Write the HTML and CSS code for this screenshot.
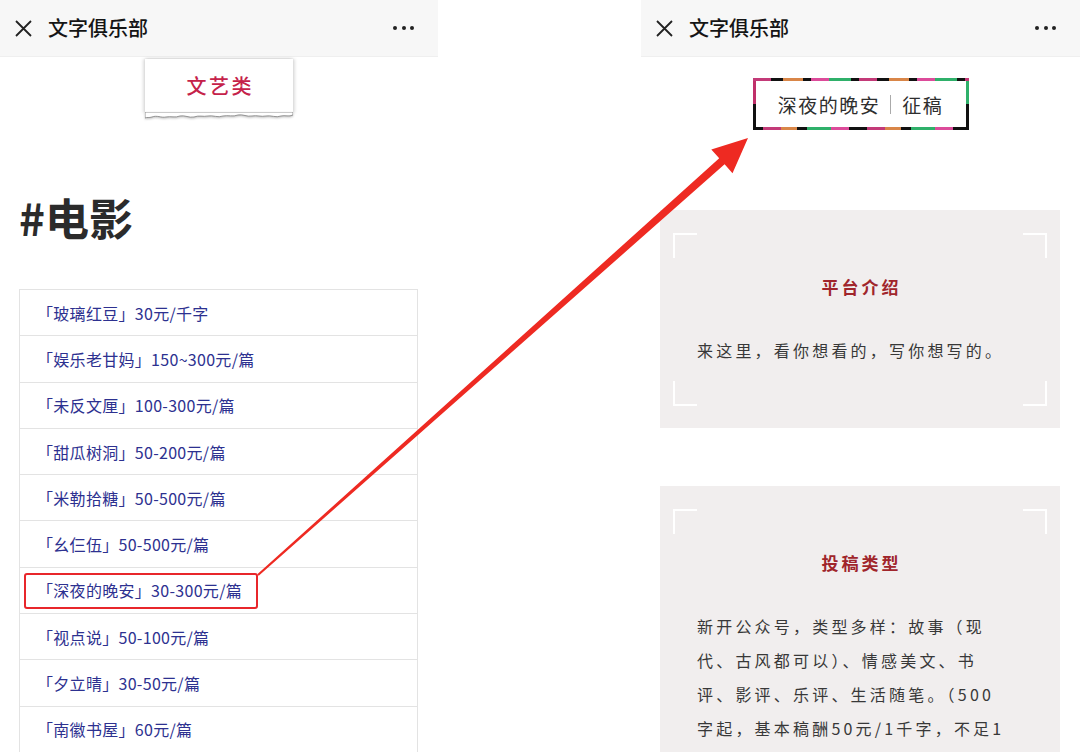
FILE: index.html
```html
<!DOCTYPE HTML>
<html>
<head>
<meta http-equiv="Content-Type" content="text/html; charset=utf-8">
<title>文字俱乐部</title>
<link rel="stylesheet" href="styles.css">
</head>

<body>
<div class="screens">
	<!-- 左边：分类列表 -->
	<div class="phone">
		<div class="topbar">
			<svg class="tb-close" width="17" height="17" viewBox="0 0 17 17"><path d="M1 1L16 16M16 1L1 16" stroke="#222" stroke-width="1.8" fill="none"/></svg>
			<span class="tb-title">文字俱乐部</span>
			<span class="tb-more"><i></i><i></i><i></i></span>
		</div>
		<div class="page">
			<div class="tag">
				<div class="tag-body">文艺类</div>
				<svg class="tag-edge" width="148" height="9" viewBox="0 0 148 9"><path d="M0 0H148V3C144 5 140 3 136 4C131 6 126 3 121 4C116 5 112 3 107 4C102 5 98 2 93 3C88 5 83 3 78 4C73 6 68 3 63 4C58 5 54 3 49 5C44 6 40 3 35 4C30 6 26 4 21 5C16 6 12 3 7 5C4 6 2 5 0 6Z" fill="#fff" stroke="#8a8a8a" stroke-width="0.9"/></svg>
			</div>
			<h1 class="cat">#电影</h1>
			<table class="accounts">
				<tr><td>「玻璃红豆」30元/千字</td></tr>
				<tr><td>「娱乐老甘妈」150~300元/篇</td></tr>
				<tr><td>「未反文厘」100-300元/篇</td></tr>
				<tr><td>「甜瓜树洞」50-200元/篇</td></tr>
				<tr><td>「米勒拾糖」50-500元/篇</td></tr>
				<tr><td>「幺仨伍」50-500元/篇</td></tr>
				<tr><td>「深夜的晚安」30-300元/篇</td></tr>
				<tr><td>「视点说」50-100元/篇</td></tr>
				<tr><td>「夕立晴」30-50元/篇</td></tr>
				<tr><td>「南徽书屋」60元/篇</td></tr>
			</table>
		</div>
	</div>
	<!-- 右边：征稿页 -->
	<div class="phone">
		<div class="topbar">
			<svg class="tb-close" width="17" height="17" viewBox="0 0 17 17"><path d="M1 1L16 16M16 1L1 16" stroke="#222" stroke-width="1.8" fill="none"/></svg>
			<span class="tb-title">文字俱乐部</span>
			<span class="tb-more"><i></i><i></i><i></i></span>
		</div>
		<div class="page">
			<div class="banner"><span>深夜的晚安</span><i class="banner-bar"></i><span>征稿</span></div>
			<div class="card">
				<span class="cn cn-tl"></span><span class="cn cn-tr"></span><span class="cn cn-bl"></span><span class="cn cn-br"></span>
				<h2 class="card-tit">平台介绍</h2>
				<p class="card-txt">来这里，看你想看的，写你想写的。</p>
			</div>
			<div class="card">
				<span class="cn cn-tl"></span><span class="cn cn-tr"></span><span class="cn cn-bl"></span><span class="cn cn-br"></span>
				<h2 class="card-tit">投稿类型</h2>
				<p class="card-txt">新开公众号，类型多样：故事（现<br>代、古风都可以）、情感美文、书<br>评、影评、乐评、生活随笔。（500<br>字起，基本稿酬50元/1千字，不足1</p>
			</div>
		</div>
	</div>
</div>
<!-- 标注：红框和箭头 -->
<svg class="mark" width="1080" height="752" viewBox="0 0 1080 752">
	<rect x="25" y="574" width="232" height="34" rx="2" fill="none" stroke="#e8262b" stroke-width="2"/>
	<polygon points="257.3,574.3 719.2,158.3 711.3,149.4 748,138 732.5,173.2 724.6,164.3 258.7,575.7" fill="#ee2a22"/>
</svg>
</body>
</html>
```

FILE: styles.css
```css
*{margin:0;padding:0;}
body{width:1080px;height:752px;overflow:hidden;position:relative;background:#fff;font-family:"Noto Sans CJK SC","Noto Sans",sans-serif;color:#333;}
.screens{display:flex;gap:203px;height:752px;}
.phone{width:438px;height:752px;overflow:hidden;background:#fff;}
.phone + .phone{width:439px;}
.topbar{height:57px;background:#f7f7f7;border-bottom:1px solid #efefef;display:flex;align-items:center;padding:0 24px 0 15px;box-sizing:border-box;}
.tb-close{display:block;flex:none;}
.tb-title{margin-left:16px;font-size:20px;font-weight:500;color:#151515;line-height:24px;}
.tb-more{margin-left:auto;display:flex;gap:4.5px;}
.tb-more i{width:4px;height:4px;border-radius:50%;background:#222;display:block;}

.tag{width:148px;margin:2px auto 0;}
.tag-body{height:54px;line-height:54px;text-align:center;background:#fff;color:#c5224a;font-size:20px;font-weight:500;letter-spacing:2.5px;text-indent:2.5px;box-shadow:-2px 0 3px rgba(0,0,0,.13),2px 0 3px rgba(0,0,0,.13),0 -1px 2px rgba(0,0,0,.06);}
.tag-edge{display:block;margin-top:-1px;filter:drop-shadow(0 1px 1px rgba(0,0,0,.25));}
.cat{margin:68px 0 0 19px;font-size:44px;line-height:56px;font-weight:700;color:#2b2b2b;}
.accounts{margin:44px 0 0 19px;width:399px;border-collapse:collapse;}
.accounts td{height:45.3px;border:1px solid #e3e3e3;padding:0 0 0 17px;font-size:16px;letter-spacing:0.3px;color:#2d3190;line-height:20px;}

.banner{width:216px;height:52px;margin:21px auto 0;box-sizing:border-box;padding:0 3px;display:flex;align-items:center;justify-content:center;font-size:19px;letter-spacing:1.5px;color:#2e2e2e;
	background:repeating-linear-gradient(90deg,#c33a78 0 18px,#111 18px 30px,#d98648 30px 50px,#111 50px 58px,#dc4b9a 58px 76px,#2fb06a 76px 98px,#111 98px 106px) top/100% 3px no-repeat,
	repeating-linear-gradient(90deg,#111 0 10px,#c33a78 10px 28px,#d98648 28px 44px,#111 44px 54px,#2fb06a 54px 78px,#dc4b9a 78px 96px,#111 96px 104px) bottom/100% 3px no-repeat,
	linear-gradient(#c0306a 0 50%,#111 50%) left/3px 100% no-repeat,
	linear-gradient(#2fb06a 0 50%,#111 50%) right/3px 100% no-repeat,#fff;}
.banner-bar{display:block;width:1px;height:19px;background:#aaa;margin:0 11px 0 10px;}

.card{position:relative;margin:80px 20px 0 19px;background:#f1eeee;padding:65px 0 61px 37px;}
.card + .card{margin-top:58px;}
.cn{position:absolute;width:22px;height:23px;border:0 solid #fff;}
.cn-tl{left:13px;top:23px;border-width:2px 0 0 2px;}
.cn-tr{right:13px;top:23px;border-width:2px 2px 0 0;}
.cn-bl{left:13px;bottom:22px;border-width:0 0 2px 2px;}
.cn-br{right:13px;bottom:22px;border-width:0 2px 2px 0;}
.card-tit{margin-left:-37px;text-align:center;font-size:17px;line-height:24px;font-weight:700;color:#a0252b;letter-spacing:3px;text-indent:3px;}
.card-txt{margin-top:34px;font-size:16px;line-height:34px;color:#383838;letter-spacing:3.2px;white-space:nowrap;}

.mark{position:absolute;left:0;top:0;pointer-events:none;}
```
